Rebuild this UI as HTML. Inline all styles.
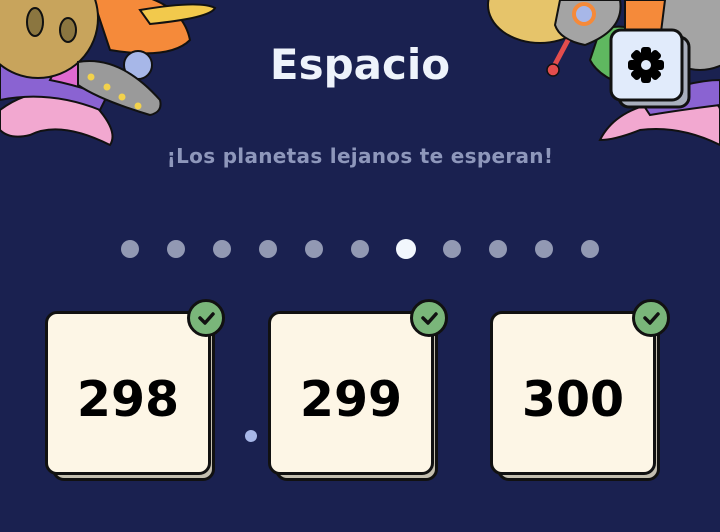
<!DOCTYPE html>
<html><head><meta charset="utf-8"><style>
html,body{margin:0;padding:0;}
body{width:720px;height:532px;background:#1a2150;position:relative;overflow:hidden;font-family:"DejaVu Sans","Liberation Sans",sans-serif;}
.title{position:absolute;left:0;width:720px;top:40px;text-align:center;color:#eef3fb;font:bold 42px "DejaVu Sans","Liberation Sans",sans-serif;}
.sub{position:absolute;left:0;width:720px;top:144px;text-align:center;color:#8e97bb;font-weight:bold;font-size:20px;letter-spacing:0.3px;}
.dot{position:absolute;width:18px;height:18px;border-radius:50%;background:#9299b3;top:240px;}
.card{position:absolute;top:311px;width:166px;height:164px;}
.card .sh{position:absolute;left:7px;top:8px;width:163px;height:162px;background:#c4bfb0;border:3px solid #111;border-radius:12px;box-sizing:border-box;}
.card .face{position:absolute;left:0;top:0;width:166px;height:164px;padding-top:12px;background:#fdf6e6;border:3px solid #111;border-radius:12px;box-sizing:border-box;display:flex;align-items:center;justify-content:center;font-weight:bold;font-size:49px;color:#000;font-family:"DejaVu Sans",sans-serif;}
.chk{position:absolute;width:38px;height:38px;border-radius:50%;background:#7ab67a;border:3px solid #111;box-sizing:border-box;top:-12px;left:142px;}
</style></head><body>
<svg width="720" height="150" style="position:absolute;left:0;top:0">
 <path d="M0 110 Q40 80 90 100 Q120 130 110 145 Q60 120 30 135 Q10 140 0 130Z" fill="#f2a8d0" stroke="#111" stroke-width="2"/>
 <path d="M0 60 Q60 50 110 90 L100 110 Q50 90 0 100Z" fill="#8a63d2" stroke="#111" stroke-width="2"/>
 <path d="M60 60 Q120 70 150 100 L140 112 Q100 90 50 80Z" fill="#e06ad0" stroke="#111" stroke-width="2"/>
 <path d="M90 -10 Q180 -10 190 40 Q170 60 110 50Z" fill="#f58a3a" stroke="#111" stroke-width="2"/>
 <path d="M140 10 Q200 0 215 8 Q210 18 150 24Z" fill="#f2c94c" stroke="#111" stroke-width="2"/>
 <circle cx="38" cy="18" r="60" fill="#c8a45c" stroke="#111" stroke-width="2"/>
 <ellipse cx="35" cy="22" rx="8" ry="14" fill="#8b7640" stroke="#111" stroke-width="2"/>
 <ellipse cx="68" cy="30" rx="8" ry="12" fill="#8b7640" stroke="#111" stroke-width="2"/>
 <circle cx="138" cy="65" r="14" fill="#a7b7e8" stroke="#111" stroke-width="2"/>
 <path d="M78 62 Q120 55 160 100 Q163 112 150 115 Q100 100 78 85Z" fill="#9a9a9a" stroke="#111" stroke-width="2"/>
 <circle cx="91" cy="77" r="3.5" fill="#f2d24c"/><circle cx="107" cy="87" r="3.5" fill="#f2d24c"/><circle cx="122" cy="97" r="3.5" fill="#f2d24c"/><circle cx="138" cy="106" r="3.5" fill="#f2d24c"/>
 <path d="M600 140 Q620 100 690 100 Q720 100 720 110 L720 145 Q680 125 640 130 Q615 140 600 140Z" fill="#f2a8d0" stroke="#111" stroke-width="2"/>
 <path d="M640 100 Q690 80 720 80 L720 105 Q680 110 650 115Z" fill="#8a63d2" stroke="#111" stroke-width="2"/>
 <ellipse cx="540" cy="5" rx="52" ry="38" fill="#e6c46a" stroke="#111" stroke-width="2"/>
 <circle cx="700" cy="20" r="50" fill="#a4a4a4" stroke="#111" stroke-width="2"/>
 <path d="M600 30 Q630 20 650 40 L640 90 Q600 80 590 60Z" fill="#5fb860" stroke="#111" stroke-width="2"/>
 <path d="M625 0 L665 0 L660 40 L625 40Z" fill="#f58a3a" stroke="#111" stroke-width="2"/>
 <path d="M560 0 L620 0 Q625 30 585 45 Q560 40 555 25Z" fill="#a4a4a4" stroke="#111" stroke-width="2"/>
 <circle cx="584" cy="14" r="10" fill="#a7b7e8" stroke="#f58a3a" stroke-width="4"/>
 <path d="M568 40 L552 70" stroke="#e34d4d" stroke-width="5"/>
 <circle cx="553" cy="70" r="6" fill="#e34d4d" stroke="#111" stroke-width="1.5"/>
 <rect x="619" y="37" width="70" height="70" rx="10" fill="#a9afbd" stroke="#111" stroke-width="3"/>
 <rect x="611" y="30" width="71" height="70" rx="10" fill="#e1ebfb" stroke="#111" stroke-width="3"/>
 <g transform="translate(646,65)" fill="#000">
  <circle r="12"/>
  <g id="t"><rect x="-5" y="-18" width="10" height="9" rx="3"/></g>
  <use href="#t" transform="rotate(45)"/><use href="#t" transform="rotate(90)"/><use href="#t" transform="rotate(135)"/>
  <use href="#t" transform="rotate(180)"/><use href="#t" transform="rotate(225)"/><use href="#t" transform="rotate(270)"/><use href="#t" transform="rotate(315)"/>
  <circle r="5" fill="#e1ebfb"/>
 </g>
</svg>
<div class="title">Espacio</div>
<div class="sub">¡Los planetas lejanos te esperan!</div>
<div class="dot" style="left:121px"></div><div class="dot" style="left:167px"></div><div class="dot" style="left:213px"></div><div class="dot" style="left:259px"></div><div class="dot" style="left:305px"></div><div class="dot" style="left:351px"></div>
<div class="dot" style="left:396px;top:239px;width:20px;height:20px;background:#f2f7fd"></div>
<div class="dot" style="left:443px"></div><div class="dot" style="left:489px"></div><div class="dot" style="left:535px"></div><div class="dot" style="left:581px"></div>
<div class="dot" style="left:245px;top:430px;width:12px;height:12px;background:#a7b7e8"></div>
<div class="card" style="left:45px"><div class="sh"></div><div class="face">298</div><div class="chk"><svg width="32" height="32" style="position:absolute;left:0;top:0"><path d="M10 16 L15 21 L23 12" stroke="#111" stroke-width="3.5" fill="none" stroke-linecap="round" stroke-linejoin="round"/></svg></div></div>
<div class="card" style="left:268px"><div class="sh"></div><div class="face">299</div><div class="chk"><svg width="32" height="32" style="position:absolute;left:0;top:0"><path d="M10 16 L15 21 L23 12" stroke="#111" stroke-width="3.5" fill="none" stroke-linecap="round" stroke-linejoin="round"/></svg></div></div>
<div class="card" style="left:490px"><div class="sh"></div><div class="face">300</div><div class="chk"><svg width="32" height="32" style="position:absolute;left:0;top:0"><path d="M10 16 L15 21 L23 12" stroke="#111" stroke-width="3.5" fill="none" stroke-linecap="round" stroke-linejoin="round"/></svg></div></div>
</body></html>
